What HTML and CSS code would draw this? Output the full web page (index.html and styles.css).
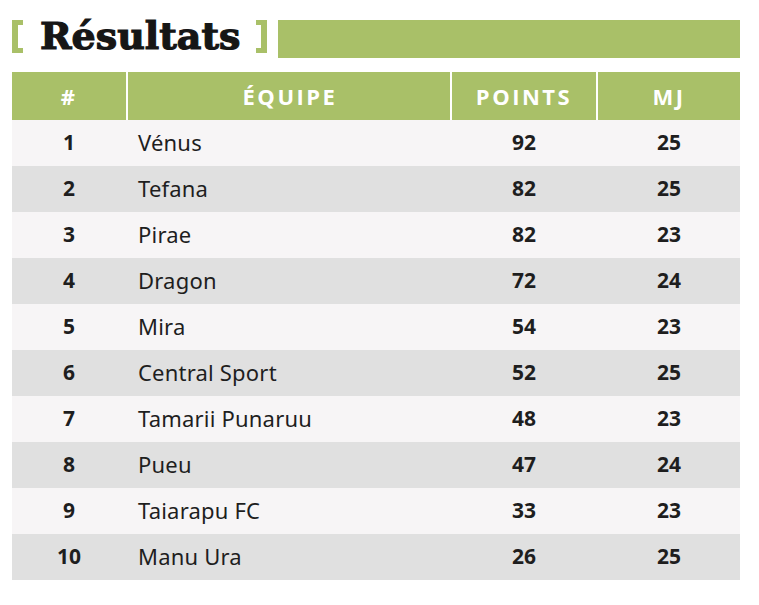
FILE: index.html
```html
<!DOCTYPE html>
<html lang="fr">
<head>
<meta charset="utf-8">
<title>Résultats</title>
<link rel="stylesheet" href="styles.css">
</head>
<body>
<div class="page">
  <div class="title-row">
    <span class="bracket bracket-left"></span>
    <h1 class="title">Résultats</h1>
    <span class="bracket bracket-right"></span>
    <div class="title-bar"></div>
  </div>
  <div class="table">
    <div class="row head">
      <div class="cell c-num">#</div>
      <div class="cell c-team">ÉQUIPE</div>
      <div class="cell c-pts">POINTS</div>
      <div class="cell c-mj">MJ</div>
    </div>
    <div class="row odd"><div class="cell c-num">1</div><div class="cell c-team">Vénus</div><div class="cell c-pts">92</div><div class="cell c-mj">25</div></div>
    <div class="row even"><div class="cell c-num">2</div><div class="cell c-team">Tefana</div><div class="cell c-pts">82</div><div class="cell c-mj">25</div></div>
    <div class="row odd"><div class="cell c-num">3</div><div class="cell c-team">Pirae</div><div class="cell c-pts">82</div><div class="cell c-mj">23</div></div>
    <div class="row even"><div class="cell c-num">4</div><div class="cell c-team">Dragon</div><div class="cell c-pts">72</div><div class="cell c-mj">24</div></div>
    <div class="row odd"><div class="cell c-num">5</div><div class="cell c-team">Mira</div><div class="cell c-pts">54</div><div class="cell c-mj">23</div></div>
    <div class="row even"><div class="cell c-num">6</div><div class="cell c-team">Central Sport</div><div class="cell c-pts">52</div><div class="cell c-mj">25</div></div>
    <div class="row odd"><div class="cell c-num">7</div><div class="cell c-team">Tamarii Punaruu</div><div class="cell c-pts">48</div><div class="cell c-mj">23</div></div>
    <div class="row even"><div class="cell c-num">8</div><div class="cell c-team">Pueu</div><div class="cell c-pts">47</div><div class="cell c-mj">24</div></div>
    <div class="row odd"><div class="cell c-num">9</div><div class="cell c-team">Taiarapu FC</div><div class="cell c-pts">33</div><div class="cell c-mj">23</div></div>
    <div class="row even"><div class="cell c-num">10</div><div class="cell c-team">Manu Ura</div><div class="cell c-pts">26</div><div class="cell c-mj">25</div></div>
  </div>
</div>
</body>
</html>
```
FILE: styles.css
```css
* { box-sizing: border-box; }
html, body { margin: 0; padding: 0; background: #ffffff; }
.page {
  width: 759px;
  padding: 15px 19px 0 12px;
  font-family: "Noto Sans", "Open Sans", sans-serif;
  color: #1e1e1e;
}
.title-row {
  display: flex;
  align-items: center;
  height: 42px;
}
.bracket {
  width: 11px;
  height: 33px;
  border: 5px solid #a9c068;
  flex: none;
}
.bracket-left { border-right: none; border-left-width: 6px; }
.bracket-right { border-left: none; border-right-width: 6px; }
.title {
  margin: 0 16px 0 17px;
  font-family: "DejaVu Serif", serif;
  font-weight: 900;
  font-size: 38px;
  line-height: 42px;
  color: #161616;
  letter-spacing: 0;
  -webkit-text-stroke: 1.2px #161616;
}
.title-bar {
  flex: 1;
  height: 38px;
  margin-left: 11px;
  margin-top: 5px;
  background: #a9c068;
}
.table {
  margin-top: 15px;
  width: 728px;
}
.row {
  display: grid;
  grid-template-columns: 114px 322px 144px 142px;
  column-gap: 2px;
  height: 46px;
  align-items: center;
}
.row.head {
  height: 48px;
  background: #ffffff;
}
.row.head .cell {
  height: 100%;
  background: #a9c068;
  color: #ffffff;
  font-family: "Open Sans", sans-serif;
  font-weight: 700;
  font-size: 22px;
  letter-spacing: 2.5px;
  display: flex;
  align-items: center;
  justify-content: center;
  padding-bottom: 1px;
}
.row.head .c-team { padding-left: 2px; }
.row.odd { background: #f7f5f6; }
.row.even { background: #e0e0e0; }
.cell { font-size: 21px; padding-bottom: 3px; }
.c-num, .c-pts, .c-mj {
  text-align: center;
  font-weight: 700;
}
.c-team { padding-left: 10px; font-size: 22px; letter-spacing: 0.2px; }
```
